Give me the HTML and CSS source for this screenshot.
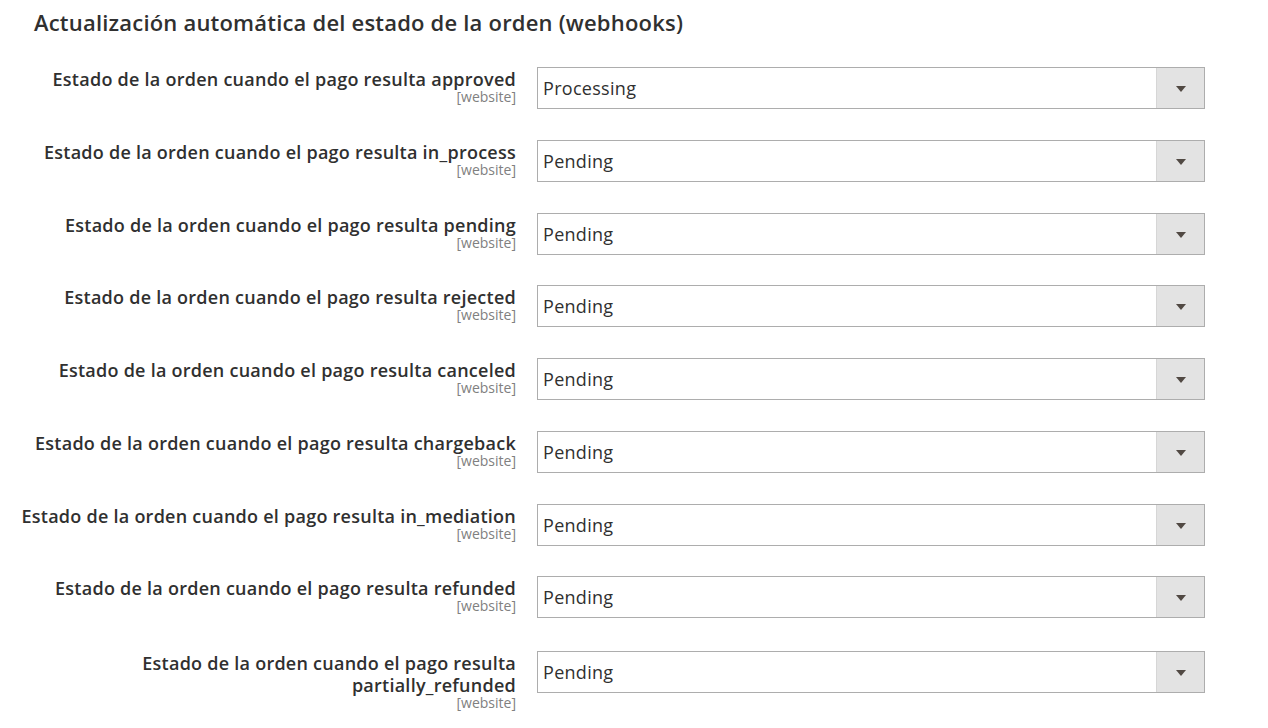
FILE: index.html
```html
<!DOCTYPE html>
<html lang="es">
<head>
<meta charset="utf-8">
<link rel="stylesheet" href="styles.css">
</head>
<body>
<div class="section">
  <h2 class="title">Actualización automática del estado de la orden (webhooks)</h2>
  <div class="rows">
    <div class="row">
      <div class="label"><span class="name">Estado de la orden cuando el pago resulta approved</span><span class="scope">[website]</span></div>
      <div class="select"><span class="value">Processing</span><span class="arrow"></span></div>
    </div>
    <div class="row">
      <div class="label"><span class="name">Estado de la orden cuando el pago resulta in_process</span><span class="scope">[website]</span></div>
      <div class="select"><span class="value">Pending</span><span class="arrow"></span></div>
    </div>
    <div class="row">
      <div class="label"><span class="name">Estado de la orden cuando el pago resulta pending</span><span class="scope">[website]</span></div>
      <div class="select"><span class="value">Pending</span><span class="arrow"></span></div>
    </div>
    <div class="row">
      <div class="label"><span class="name">Estado de la orden cuando el pago resulta rejected</span><span class="scope">[website]</span></div>
      <div class="select"><span class="value">Pending</span><span class="arrow"></span></div>
    </div>
    <div class="row">
      <div class="label"><span class="name">Estado de la orden cuando el pago resulta canceled</span><span class="scope">[website]</span></div>
      <div class="select"><span class="value">Pending</span><span class="arrow"></span></div>
    </div>
    <div class="row">
      <div class="label"><span class="name">Estado de la orden cuando el pago resulta chargeback</span><span class="scope">[website]</span></div>
      <div class="select"><span class="value">Pending</span><span class="arrow"></span></div>
    </div>
    <div class="row">
      <div class="label"><span class="name">Estado de la orden cuando el pago resulta in_mediation</span><span class="scope">[website]</span></div>
      <div class="select"><span class="value">Pending</span><span class="arrow"></span></div>
    </div>
    <div class="row">
      <div class="label"><span class="name">Estado de la orden cuando el pago resulta refunded</span><span class="scope">[website]</span></div>
      <div class="select"><span class="value">Pending</span><span class="arrow"></span></div>
    </div>
    <div class="row row-last">
      <div class="label"><span class="name">Estado de la orden cuando el pago resulta partially_refunded</span><span class="scope">[website]</span></div>
      <div class="select"><span class="value">Pending</span><span class="arrow"></span></div>
    </div>
  </div>
</div>
</body>
</html>
```

FILE: styles.css
```css
html, body {
  margin: 0;
  padding: 0;
  background: #ffffff;
}
body {
  font-family: "Open Sans", "Liberation Sans", sans-serif;
  color: #303030;
  width: 1268px;
  height: 728px;
  overflow: hidden;
}
.section {
  padding: 8px 0 0 0;
}
.title {
  margin: 0 0 0 34px;
  font-size: 22px;
  font-weight: 600;
  letter-spacing: 0.2px;
  line-height: 28px;
  color: #303030;
}
.rows {
  margin-top: 31px;
  display: flex;
  flex-direction: column;
  gap: 30.75px;
}
.row {
  display: grid;
  grid-template-columns: 516px 668px;
  column-gap: 21px;
  align-items: start;
}
.row-last {
  margin-top: 2px;
}
.label {
  display: flex;
  flex-direction: column;
  align-items: flex-end;
  text-align: right;
  padding-top: 1px;
}
.name {
  font-size: 18px;
  font-weight: 600;
  letter-spacing: 0.25px;
  line-height: 22px;
  color: #303030;
}
.scope {
  font-size: 14px;
  line-height: 14px;
  color: #808080;
}
.select {
  box-sizing: border-box;
  height: 42px;
  border: 1px solid #adadad;
  display: flex;
  align-items: stretch;
  background: #ffffff;
}
.value {
  flex: 1;
  display: flex;
  align-items: center;
  padding-left: 5px;
  font-size: 18px;
  letter-spacing: 0.3px;
  color: #303030;
}
.arrow {
  width: 47px;
  background: #e3e3e3;
  border-left: 1px solid #d6d6d6;
  position: relative;
}
.arrow::after {
  content: "";
  position: absolute;
  left: 50%;
  top: 50%;
  margin-left: -5px;
  margin-top: -2px;
  border-left: 5px solid transparent;
  border-right: 5px solid transparent;
  border-top: 6px solid #514943;
}
```
